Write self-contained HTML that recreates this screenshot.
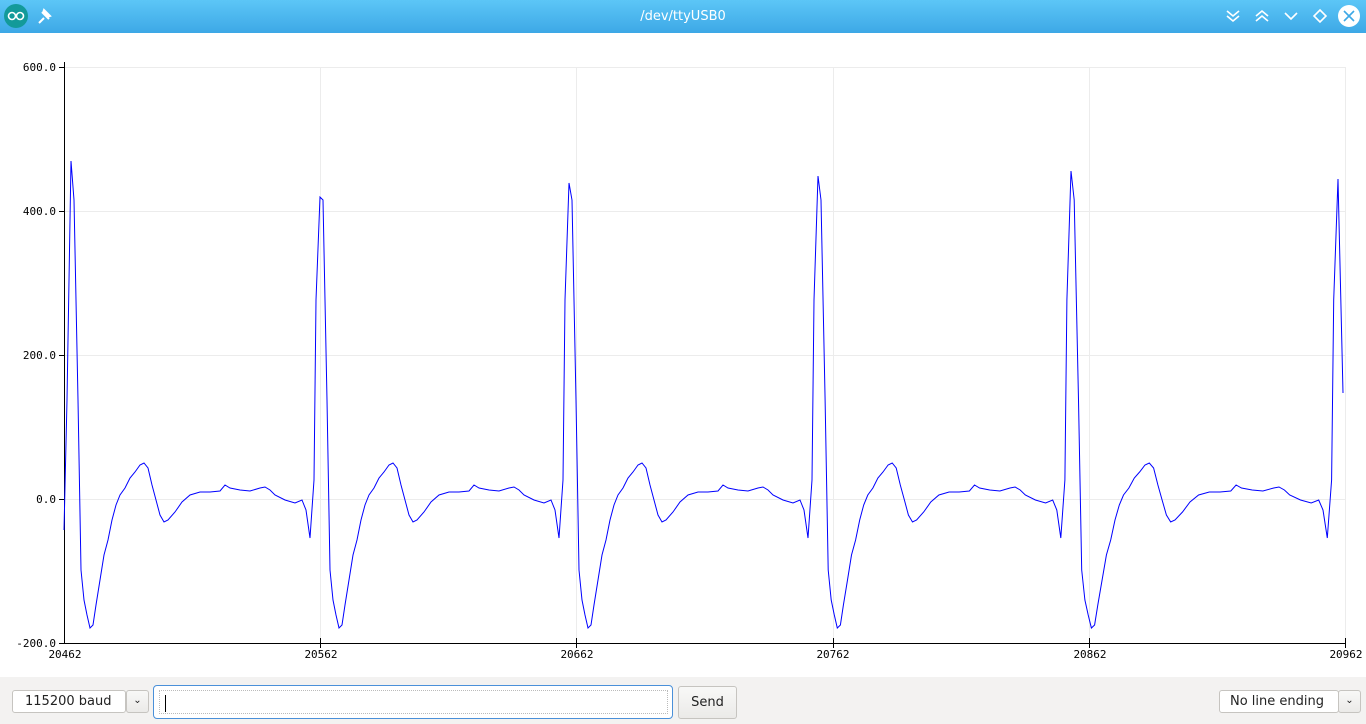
<!DOCTYPE html>
<html><head><meta charset="utf-8"><style>
body{margin:0;width:1366px;height:724px;overflow:hidden;background:#fff;font-family:"DejaVu Sans","Liberation Sans",sans-serif;position:relative}
.tb{position:absolute;left:0;top:0;width:1366px;height:33px;background:linear-gradient(#5cc6f7,#3da8e6)}
.title{position:absolute;top:9px;width:1366px;text-align:center;color:#fff;font-size:13px}
.bb{position:absolute;left:0;top:677px;width:1366px;height:47px;background:#f3f2f1}
.box{position:absolute;box-sizing:border-box;border:1px solid #c6c4c0;border-radius:3px;background:#fff;font-size:13px;color:#222}
.btn{background:linear-gradient(#f8f8f7,#ebeae8)}
</style></head><body>
<div class="tb">
<svg width="1366" height="33" style="position:absolute;left:0;top:0">
<circle cx="16" cy="16" r="12" fill="#139a9a"/>
<circle cx="12" cy="16" r="3.5" fill="none" stroke="#fff" stroke-width="1.6"/><circle cx="20" cy="16" r="3.5" fill="none" stroke="#fff" stroke-width="1.6"/>
<path d="M39 23l5-5M42 12l7 7M44 10l6 6-3 1-4-4z" stroke="#fff" stroke-width="2" fill="#fff"/>
<g stroke="#fff" stroke-width="1.6" fill="none">
<path d="M1227 11l6 5 6-5M1227 16l6 5 6-5"/>
<path d="M1256 16l6-5 6 5M1256 21l6-5 6 5"/>
<path d="M1285 13l6 6 6-6"/>
<path d="M1320 10l6 6-6 6-6-6z"/>
</g>
<circle cx="1349" cy="16" r="11" fill="#fff"/>
<path d="M1344 11l10 10M1354 11l-10 10" stroke="#3da8e6" stroke-width="1.6"/>
</svg>
<div class="title">/dev/ttyUSB0</div>
</div>
<svg id="c" width="1366" height="677" style="position:absolute;left:0;top:0;font-family:'DejaVu Sans Mono','Liberation Mono',monospace;font-size:11px">
<g stroke="#ececec" stroke-width="1">
<line x1="64" y1="67.5" x2="1346" y2="67.5"/><line x1="64" y1="211.5" x2="1346" y2="211.5"/><line x1="64" y1="355.5" x2="1346" y2="355.5"/><line x1="64" y1="499.5" x2="1346" y2="499.5"/>
<line x1="320.5" y1="67" x2="320.5" y2="643"/><line x1="576.5" y1="67" x2="576.5" y2="643"/><line x1="833.5" y1="67" x2="833.5" y2="643"/><line x1="1089.5" y1="67" x2="1089.5" y2="643"/><line x1="1345.5" y1="67" x2="1345.5" y2="643"/>
</g>
<g stroke="#000" stroke-width="1">
<line x1="64.5" y1="62" x2="64.5" y2="643"/><line x1="64" y1="643.5" x2="1346" y2="643.5"/>
<line x1="59" y1="67.5" x2="64" y2="67.5"/><line x1="59" y1="211.5" x2="64" y2="211.5"/><line x1="59" y1="355.5" x2="64" y2="355.5"/><line x1="59" y1="499.5" x2="64" y2="499.5"/><line x1="59" y1="643.5" x2="64" y2="643.5"/>
<line x1="320.5" y1="638" x2="320.5" y2="648"/><line x1="576.5" y1="638" x2="576.5" y2="648"/><line x1="833.5" y1="638" x2="833.5" y2="648"/><line x1="1089.5" y1="638" x2="1089.5" y2="648"/><line x1="1345.5" y1="638" x2="1345.5" y2="648"/>
</g>
<g fill="#000" text-anchor="end">
<text x="56" y="71">600.0</text><text x="56" y="215">400.0</text><text x="56" y="359">200.0</text><text x="56" y="503">0.0</text><text x="56" y="647">-200.0</text>
</g>
<g fill="#000" text-anchor="middle">
<text x="65" y="658">20462</text><text x="321" y="658">20562</text><text x="577" y="658">20662</text><text x="833" y="658">20762</text><text x="1090" y="658">20862</text><text x="1346" y="658">20962</text>
</g>
<polyline id="w" fill="none" stroke="#0000ff" stroke-width="1"/>
</svg>
<script>
var t=[[3,200],[7,400],[10,570],[13,600],[16,615],[19,628],[22,625],[25,605],[29,580],[33,555],[37,540],[41,520],[45,505],[49,495],[54,488],[59,478],[64,472],[69,465],[73,463],[77,468],[81,485],[85,500],[89,515],[93,522],[97,520],[104,512],[111,502],[119,495],[129,492],[139,492],[149,491],[154,485],[159,488],[169,490],[179,491],[189,488],[194,487],[199,490],[204,495],[214,500],[224,503],[231,500],[235,510],[239,538],[243,480],[245,300]];
var peaks=[[71,161],[320,197],[569,183],[818,176],[1071,171]];
var p="64,530 67,400 ";
peaks.forEach(function(k,i){var P=k[0];p+=P+","+k[1]+" ";var nx=i<4?peaks[i+1][0]:1338;var s=(nx-P)/249;t.forEach(function(q){p+=(P+q[0]*s).toFixed(1)+","+q[1]+" ";});});
p+="1338,179 1343,393";
document.getElementById('w').setAttribute('points',p);
</script>
<div class="bb">
<div class="box" style="left:12px;top:13px;width:114px;height:23px;padding:3px 0 0 12px">115200 baud</div>
<div class="box btn" style="left:126px;top:13px;width:23px;height:23px;text-align:center;font-size:10px;padding-top:4px">&#8964;</div>
<div class="box" style="left:153px;top:8px;width:520px;height:34px;border:1px solid #4a90d9;border-radius:4px"><div style="position:absolute;left:5px;top:4px;right:4px;bottom:4px;border:1px dotted #bbb"><div style="position:absolute;left:5px;top:4px;width:1px;height:17px;background:#000"></div></div></div>
<div class="box btn" style="left:678px;top:9px;width:59px;height:33px;text-align:center;padding-top:8px">Send</div>
<div class="box" style="left:1219px;top:13px;width:120px;height:23px;padding:3px 0 0 10px">No line ending</div>
<div class="box btn" style="left:1338px;top:13px;width:23px;height:23px;text-align:center;font-size:10px;padding-top:4px">&#8964;</div>
</div>
</body></html>
